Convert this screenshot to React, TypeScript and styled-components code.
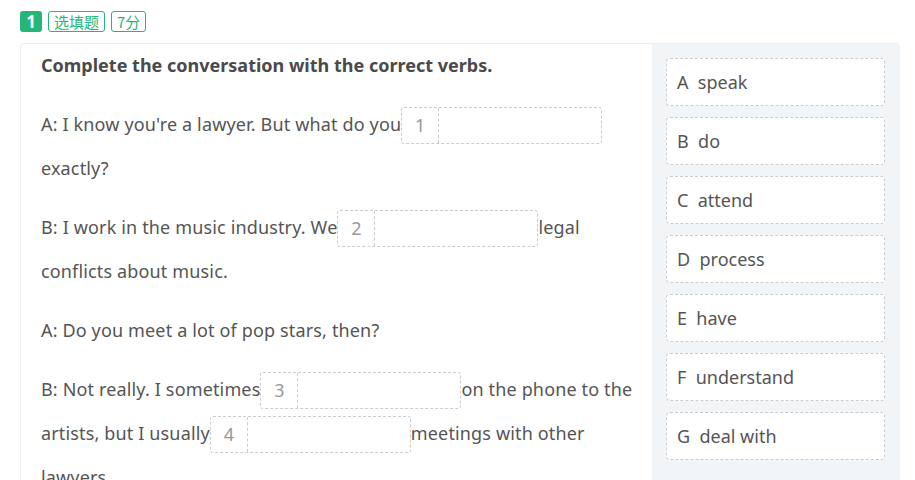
import React from "react";
import styled, { createGlobalStyle } from "styled-components";

const Global = createGlobalStyle`
  html, body { margin: 0; padding: 0; background: #fff; }
  body { font-family: "Noto Sans", "Open Sans", "Noto Sans CJK SC", sans-serif; color: #555; }
  * { box-sizing: border-box; }
`;

const Page = styled.div`
  padding: 11px 15px 0 20px;
  width: 915px;
  height: 480px;
  overflow: hidden;
`;

const Header = styled.div`
  display: flex;
  gap: 6px;
  align-items: center;
  height: 21px;
`;

const NumBadge = styled.span`
  display: inline-flex;
  align-items: center;
  justify-content: center;
  width: 22px;
  height: 21px;
  background: #25b779;
  color: #fff;
  border-radius: 3px;
  font-size: 17px;
  font-weight: 700;
`;

const Tag = styled.span`
  display: inline-flex;
  align-items: center;
  height: 21px;
  padding: 0 5px;
  border: 1px solid #25b779;
  color: #25b779;
  border-radius: 3px;
  font-size: 15px;
  font-family: "Noto Sans CJK SC", sans-serif;
`;

const Card = styled.div`
  margin-top: 11px;
  display: grid;
  grid-template-columns: 631px 248px;
  border: 1px solid #eee;
  border-radius: 4px;
  height: 460px;
`;

const Left = styled.div`
  padding: 9px 8px 0 20px;
  font-size: 18px;
`;

const Title = styled.div`
  font-weight: 700;
  color: #4a4a4a;
  line-height: 24px;
  margin-bottom: 25px;
`;

const Para = styled.p`
  margin: 0 0 15px;
  line-height: 44px;
  color: #555;
  letter-spacing: 0.15px;
`;

const Blank = styled.span`
  display: inline-flex;
  vertical-align: middle;
  width: 201px;
  height: 37px;
  border: 1px dashed #ccc;
  border-radius: 3px;
  position: relative;
  top: -1px;
  letter-spacing: 0;
`;

const BlankNum = styled.span`
  width: 37px;
  border-right: 1px dashed #ccc;
  display: flex;
  align-items: center;
  justify-content: center;
  color: #999;
  line-height: 1;
`;

const Right = styled.div`
  background: #f2f5f8;
  border-top-right-radius: 4px;
  padding: 14px 15px 0 14px;
  display: flex;
  flex-direction: column;
  gap: 11px;
`;

const Option = styled.div`
  height: 48px;
  background: #fff;
  border: 1px dashed #ccc;
  border-radius: 4px;
  display: flex;
  align-items: center;
  padding: 0 10px;
  font-size: 18px;
  color: #555;
  white-space: pre;
`;

const B = ({ n }: { n: number }) => (
  <Blank>
    <BlankNum>{n}</BlankNum>
  </Blank>
);

const options = [
  ["A", "speak"],
  ["B", "do"],
  ["C", "attend"],
  ["D", "process"],
  ["E", "have"],
  ["F", "understand"],
  ["G", "deal with"],
];

export default function App() {
  return (
    <Page>
      <Global />
      <Header>
        <NumBadge>1</NumBadge>
        <Tag>选填题</Tag>
        <Tag>7分</Tag>
      </Header>
      <Card>
        <Left>
          <Title>Complete the conversation with the correct verbs.</Title>
          <Para>
            A: I know you're a lawyer. But what do you<B n={1} />
            <br />exactly?
          </Para>
          <Para>
            B: I work in the music industry. We<B n={2} />legal conflicts about music.
          </Para>
          <Para>A: Do you meet a lot of pop stars, then?</Para>
          <Para>
            B: Not really. I sometimes<B n={3} />on the phone to the artists, but I usually
            <B n={4} />meetings with other lawyers.
          </Para>
        </Left>
        <Right>
          {options.map(([k, v]) => (
            <Option key={k}>{`${k}  ${v}`}</Option>
          ))}
        </Right>
      </Card>
    </Page>
  );
}
